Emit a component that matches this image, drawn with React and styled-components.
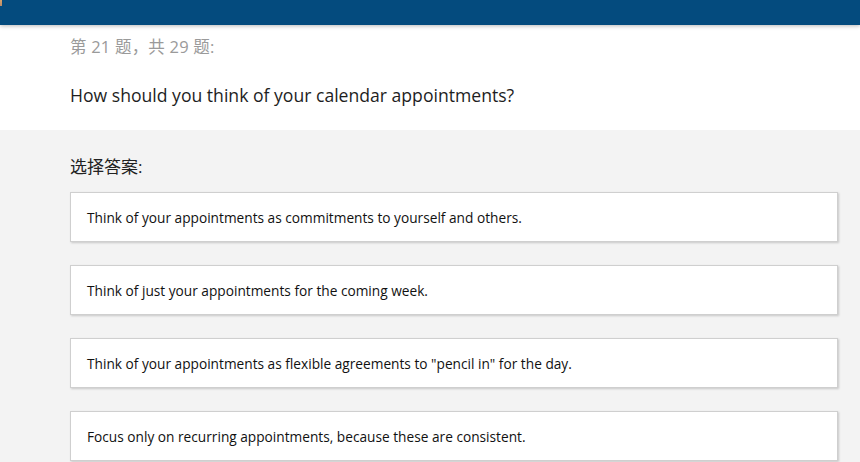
import styled, { createGlobalStyle } from "styled-components";

const GlobalStyle = createGlobalStyle`
  html, body {
    margin: 0;
    padding: 0;
    background: #f3f3f3;
    font-family: "Open Sans", "Noto Sans CJK SC", sans-serif;
  }
`;

const answers = [
  "Think of your appointments as commitments to yourself and others.",
  "Think of just your appointments for the coming week.",
  'Think of your appointments as flexible agreements to "pencil in" for the day.',
  "Focus only on recurring appointments, because these are consistent.",
];

export default function App() {
  return (
    <>
      <GlobalStyle />
      <Page>
        <TopBar>
          <LogoEdge />
        </TopBar>

        <QuestionArea>
          <Counter>第 21 题，共 29 题:</Counter>
          <Question>How should you think of your calendar appointments?</Question>
        </QuestionArea>

        <AnswerArea>
          <Prompt>选择答案:</Prompt>
          <List>
            {answers.map((a) => (
              <Card key={a}>{a}</Card>
            ))}
          </List>
        </AnswerArea>
      </Page>
    </>
  );
}

const Page = styled.div`
  width: 860px;
  height: 462px;
  overflow: hidden;
  display: flex;
  flex-direction: column;
  background: #f3f3f3;
`;

const TopBar = styled.header`
  position: relative;
  z-index: 1;
  height: 25px;
  flex: none;
  background: #044b7e;
  box-shadow: 0 1px 4px rgba(0, 0, 0, 0.28);
`;

const LogoEdge = styled.div`
  position: absolute;
  left: 0;
  top: 0;
  width: 2px;
  height: 6px;
  background: linear-gradient(#d9a36a, #b88a6a);
`;

const QuestionArea = styled.section`
  height: 105px;
  flex: none;
  background: #fff;
  padding: 11px 70px 0;
  box-sizing: border-box;
`;

const Counter = styled.div`
  font-size: 16.5px;
  line-height: 22px;
  color: #9a9a9a;
  letter-spacing: 0.2px;
`;

const Question = styled.h1`
  margin: 25px 0 0;
  font-weight: normal;
  font-size: 17.6px;
  line-height: 24px;
  color: #1e1e1e;
`;

const AnswerArea = styled.section`
  padding: 26px 22px 0 70px;
`;

const Prompt = styled.div`
  font-size: 17px;
  line-height: 22px;
  color: #222;
`;

const List = styled.div`
  margin-top: 14px;
  display: flex;
  flex-direction: column;
  gap: 23px;
`;

const Card = styled.div`
  height: 50px;
  box-sizing: border-box;
  display: flex;
  align-items: center;
  padding: 0 16px;
  background: #fff;
  border: 1px solid #cfcfcf;
  box-shadow: 1px 1px 2px rgba(0, 0, 0, 0.18);
  font-size: 13.7px;
  color: #111;
`;
